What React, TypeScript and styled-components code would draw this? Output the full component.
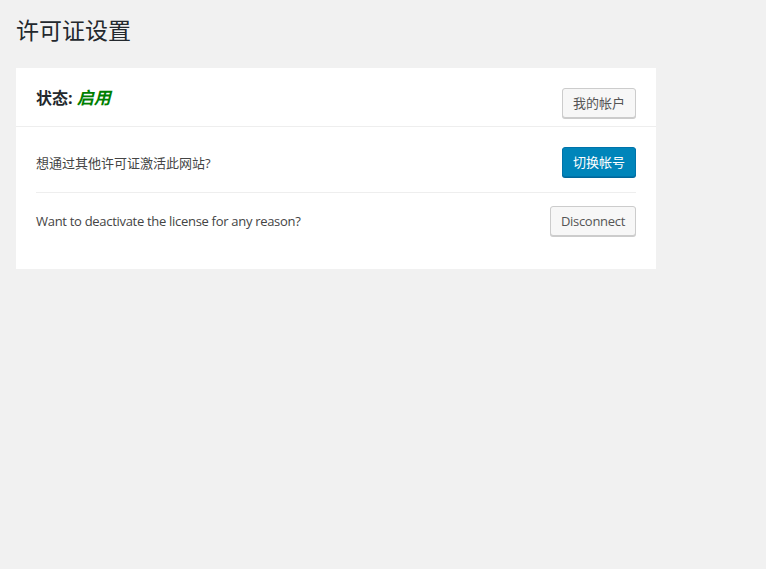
import styled, { createGlobalStyle } from 'styled-components';

const GlobalStyle = createGlobalStyle`
  html, body {
    margin: 0;
    background: #f1f1f1;
    font-family: "Open Sans", "Noto Sans", "Noto Sans CJK SC", sans-serif;
    color: #444;
    font-size: 13px;
  }
`;

const Page = styled.div`
  padding: 16px;
`;

const Title = styled.h1`
  margin: 0 0 23px;
  font-size: 23px;
  line-height: 29px;
  font-weight: 400;
  color: #23282d;
`;

const Card = styled.div`
  width: 640px;
  background: #fff;
`;

const Header = styled.div`
  display: flex;
  justify-content: space-between;
  align-items: flex-start;
  padding: 20px 20px 8px;
  border-bottom: 1px solid #eee;
`;

const Status = styled.h3`
  margin: 0;
  font-size: 16px;
  line-height: 20px;
  font-weight: 700;
  color: #23282d;

  em {
    color: #008000;
    font-style: italic;
    font-size: 17px;
  }
`;

const Body = styled.div`
  padding: 20px 20px 33px;
`;

const Row = styled.div<{ $first?: boolean }>`
  display: flex;
  justify-content: space-between;
  align-items: center;
  padding: ${(p) => (p.$first ? '0 0 15px' : '13px 0 0')};
  border-bottom: ${(p) => (p.$first ? '1px solid #eee' : 'none')};
`;

const Label = styled.span<{ $latin?: boolean }>`
  font-size: 13px;
  letter-spacing: ${(p) => (p.$latin ? '-0.3px' : '0')};
  color: #444;
`;

const Button = styled.button<{ $primary?: boolean; $latin?: boolean }>`
  height: 30px;
  padding: 0 10px 1px;
  font-family: inherit;
  font-size: 13px;
  letter-spacing: ${(p) => (p.$latin ? '-0.3px' : '0')};
  line-height: 28px;
  border-radius: 3px;
  cursor: pointer;
  border: 1px solid ${(p) => (p.$primary ? '#0073aa' : '#ccc')};
  background: ${(p) => (p.$primary ? '#0085ba' : '#f7f7f7')};
  color: ${(p) => (p.$primary ? '#fff' : '#555')};
  box-shadow: 0 1px 0 ${(p) => (p.$primary ? '#006799' : '#ccc')};
`;

export default function App() {
  return (
    <Page>
      <GlobalStyle />
      <Title>许可证设置</Title>
      <Card>
        <Header>
          <Status>
            状态: <em>启用</em>
          </Status>
          <Button>我的帐户</Button>
        </Header>
        <Body>
          <Row $first>
            <Label>想通过其他许可证激活此网站?</Label>
            <Button $primary>切换帐号</Button>
          </Row>
          <Row>
            <Label $latin>Want to deactivate the license for any reason?</Label>
            <Button $latin>Disconnect</Button>
          </Row>
        </Body>
      </Card>
    </Page>
  );
}
